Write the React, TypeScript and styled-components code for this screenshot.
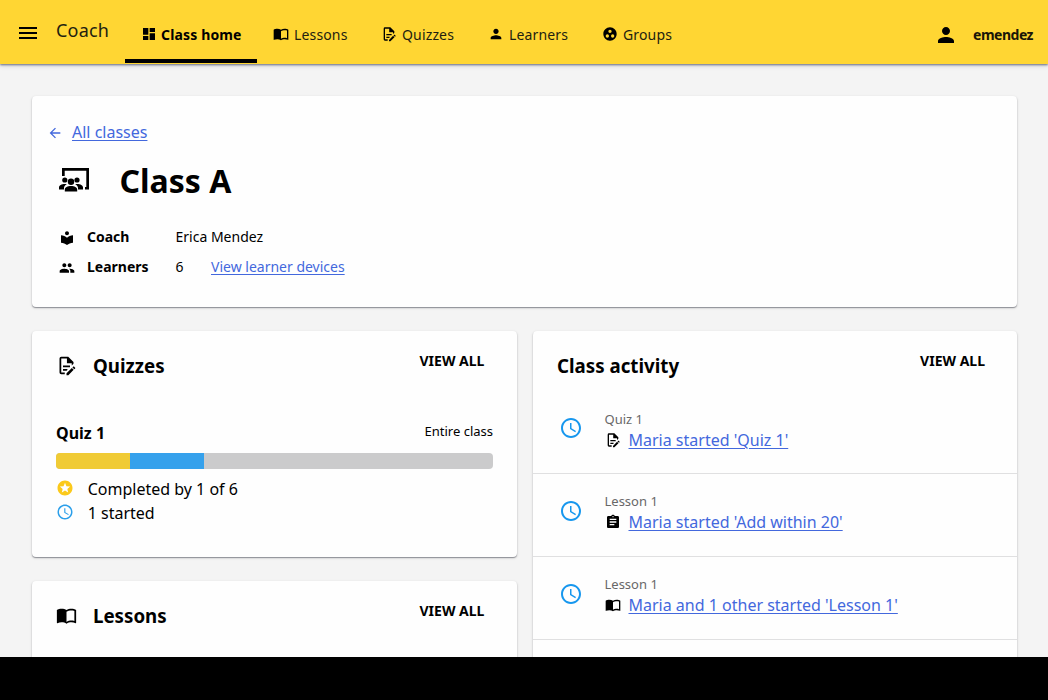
import React from "react";
import styled, { createGlobalStyle } from "styled-components";
import {
  MdMenu,
  MdDashboard,
  MdPerson,
  MdGroupWork,
  MdArrowBack,
  MdLocalLibrary,
  MdPeople,
  MdStars,
  MdAccessTime,
  MdAssignment,
} from "react-icons/md";

const Global = createGlobalStyle`
  * { box-sizing: border-box; }
  body {
    margin: 0;
    background: #000;
    color: #000;
    font-family: "Noto Sans", sans-serif;
    font-size: 16px;
    overflow: hidden;
  }
  svg { display: block; flex: none; }
`;

const Screen = styled.div`
  height: 657px;
  overflow: hidden;
  background: #f4f4f4;
`;

const Bar = styled.header`
  height: 64px;
  display: flex;
  background: #ffd633;
  box-shadow: 0 1px 2px rgba(40, 50, 90, 0.65), 0 2px 5px rgba(0, 0, 0, 0.12);
  position: relative;
`;

const MenuButton = styled.div`
  padding: 21px 16px 0;
  width: 56px;
`;

const AppName = styled.div`
  width: 69px;
  padding-top: 17px;
  font-size: 18px;
  line-height: 27px;
  letter-spacing: 0.2px;
  color: #221e10;
`;

const Nav = styled.nav`
  display: flex;
  flex: 1;
`;

const Tab = styled.div<{ $active?: boolean; $width: number }>`
  width: ${(p) => p.$width}px;
  height: 63px;
  padding: 11px 0 0 16px;
  display: flex;
  align-items: center;
  gap: ${(p) => (p.$active ? 4 : 5)}px;
  font-size: 14px;
  line-height: 20px;
  letter-spacing: 0.15px;
  white-space: nowrap;
  font-weight: ${(p) => (p.$active ? 700 : 400)};
  color: ${(p) => (p.$active ? "#000" : "#221e10")};
  border-bottom: 4px solid ${(p) => (p.$active ? "#000" : "transparent")};
  svg { color: #000; margin-bottom: 2px; }
`;

const User = styled.div`
  display: flex;
  align-items: center;
  gap: 15px;
  padding: 5px 15px 0 0;
  font-size: 14px;
  font-weight: 700;
  letter-spacing: -0.5px;
  color: #1a1608;
  svg { color: #000; }
`;

const Page = styled.main`
  padding: 32px 31px 0 32px;
`;

const Card = styled.section`
  background: #fefefe;
  border-radius: 4px;
  box-shadow: 0 1px 1px rgba(30, 34, 50, 0.4), 0 1px 3px rgba(0, 0, 0, 0.16);
`;

const ClassCard = styled(Card)`
  height: 211px;
  padding: 24px 15px;
`;

const Link = styled.span`
  color: #4368dd;
  text-decoration: underline;
  text-decoration-thickness: 1px;
  text-underline-offset: 2px;
`;

const BackRow = styled.div`
  display: flex;
  align-items: center;
  gap: 9px;
  height: 24px;
  line-height: 24px;
  svg { color: #4368dd; margin-top: 1px; }
`;

const ClassTitle = styled.h1`
  display: flex;
  align-items: center;
  gap: 29.5px;
  margin: 15px 0 0 11px;
  height: 44px;
  font-size: 32px;
  line-height: 44px;
  svg { margin-bottom: 3px; }
`;

const Facts = styled.div`
  margin: 19px 0 0 12px;
`;

const Fact = styled.div`
  display: grid;
  grid-template-columns: 28px 88.5px 35.5px auto;
  align-items: center;
  height: 30px;
  font-size: 14px;
  line-height: 20px;
  white-space: nowrap;
  svg { margin-top: 1px; }
`;

const Columns = styled.div`
  display: grid;
  grid-template-columns: 485px 484px;
  column-gap: 16px;
  margin-top: 24px;
`;

const Stack = styled.div`
  display: flex;
  flex-direction: column;
  gap: 24px;
`;

const Panel = styled(Card)<{ $height: number }>`
  height: ${(p) => p.$height}px;
`;

const PanelHead = styled.div`
  display: flex;
  align-items: flex-start;
  padding: 20px 32px 0 24px;
  ${Stack} & { padding-right: 32.6px; }
`;

const PanelIcon = styled.div`
  width: 37px;
  padding-top: 4px;
`;

const PanelTitle = styled.h2`
  flex: 1;
  margin: 0;
  font-size: 18.72px;
  line-height: 30px;
`;

const ViewAll = styled.span`
  font-size: 14px;
  font-weight: 700;
  line-height: 20px;
`;

const QuizBody = styled.div`
  padding: 41px 24px 0;
`;

const QuizRow = styled.div`
  display: flex;
  justify-content: space-between;
  height: 24px;
  font-weight: 700;
  line-height: 22px;
`;

const Scope = styled.span`
  font-size: 13px;
  line-height: 19px;
  font-weight: 400;
`;

const Progress = styled.div`
  display: flex;
  width: 437px;
  height: 16px;
  margin: 7px 0 8px;
  border-radius: 4px;
  overflow: hidden;
  background: #cbcbcc;
`;

const Segment = styled.div<{ $color: string }>`
  width: 74px;
  background: ${(p) => p.$color};
`;

const Status = styled.div`
  display: flex;
  align-items: center;
  gap: 13.7px;
  height: 24px;
  line-height: 24px;
  svg { margin-bottom: 2px; }
`;

const Activity = styled.div`
  display: flex;
  height: 83px;
  padding: 18px 0 0 26px;
  border-bottom: 1px solid #e0e0e1;
  &:first-child { padding-top: 19px; }
`;

const ActivityClock = styled.div`
  width: 45.5px;
  padding-top: 7px;
  svg { color: #1797ee; }
  ${Activity}:first-child & { padding-top: 6px; }
`;

const ActivityText = styled.div`
  display: flex;
  flex-direction: column;
`;

const Context = styled.span`
  font-size: 13px;
  line-height: 19px;
  color: #686868;
`;

const ActivityLine = styled.div`
  display: flex;
  align-items: center;
  gap: 8px;
  height: 22px;
  white-space: nowrap;
  svg { margin-bottom: 1px; }
`;

const QuizIcon = ({ size }: { size: number }) => (
  <svg width={size} height={size} viewBox="0 0 24 24" fill="currentColor">
    <path d="M8,12H16V14H8V12M10,20H6V4H13V9H18V12.1L20,10.1V8L14,2H6A2,2 0 0,0 4,4V20A2,2 0 0,0 6,22H10V20M8,18H12.1L13,17.1V16H8V18M20.2,13C20.3,13 20.5,13.1 20.6,13.2L21.9,14.5C22.1,14.7 22.1,15.1 21.9,15.3L20.9,16.3L18.8,14.2L19.8,13.2C19.9,13.1 20,13 20.2,13M20.2,16.9L14.1,23H12V20.9L18.1,14.8L20.2,16.9Z" />
    <path d="M12.500 2.500v7h7z" />
  </svg>
);

const LessonIcon = ({ size }: { size: number }) => (
  <svg width={size} height={size} viewBox="0 0 24 24" fill="currentColor">
    <path transform="translate(0 0.8)" d="M12 5C10.500 4 8.500 3.500 6.500 3.500S2.300 4 1 5v14.600c0 .3.300.5.600.4 1.500-.7 3.200-1.100 4.900-1.100 2 0 4 .5 5.500 1.600 1.500-1 3.700-1.600 5.500-1.600 1.700 0 3.400.4 4.900 1.100.300.1.600-.1.600-.4V5c-1.300-1-3.500-1.500-5.500-1.500S13.500 4 12 5zm9 12.500c-1.100-.3-2.300-.5-3.500-.5-1.700 0-4.100.600-5.500 1.500V7c1.400-.900 3.800-1.500 5.500-1.500 1.200 0 2.400.2 3.500.5z" />
  </svg>
);

const ClassIcon = () => (
  <svg width="32" height="26" viewBox="0 0 32 26" fill="currentColor">
    <path d="M4 9V1h27v21.500h-4v-2.500h1.300V3.700H6.700V9z" />
    <circle cx="6.800" cy="13" r="2.600" />
    <circle cx="19" cy="13" r="2.600" />
    <circle cx="13" cy="14.800" r="3.200" />
    <path d="M1 22.500v-2.200c0-2 2.600-3.400 5.800-3.400.8 0 1.400.1 2 .3-1.900 1-2.800 2.200-2.800 3.700v1.600zM25 22.500v-2.200c0-2-2.600-3.400-5.800-3.400-.8 0-1.400.1-2 .3 1.900 1 2.800 2.200 2.800 3.700v1.600zM6.800 24.500v-2c0-2.200 2.800-3.600 6.200-3.600s6.200 1.400 6.200 3.600v2z" />
  </svg>
);

const activities = [
  { context: "Quiz 1", text: "Maria started 'Quiz 1'", icon: <QuizIcon size={16} /> },
  { context: "Lesson 1", text: "Maria started 'Add within 20'", icon: <MdAssignment size={16} /> },
  { context: "Lesson 1", text: "Maria and 1 other started 'Lesson 1'", icon: <LessonIcon size={16} /> },
];

const ActivityList = styled.div`
  padding-top: 10px;
`;

export default function App() {
  return (
    <>
      <Global />
      <Screen>
        <Bar>
          <MenuButton><MdMenu size={24} /></MenuButton>
          <AppName>Coach</AppName>
          <Nav>
            <Tab $active $width={132}><MdDashboard size={16} />Class home</Tab>
            <Tab $width={108}><LessonIcon size={16} />Lessons</Tab>
            <Tab $width={107}><QuizIcon size={16} />Quizzes</Tab>
            <Tab $width={114}><MdPerson size={16} />Learners</Tab>
            <Tab $width={110}><MdGroupWork size={16} />Groups</Tab>
          </Nav>
          <User><MdPerson size={24} />emendez</User>
        </Bar>
        <Page>
          <ClassCard>
            <BackRow><MdArrowBack size={16} /><Link>All classes</Link></BackRow>
            <ClassTitle><ClassIcon />Class A</ClassTitle>
            <Facts>
              <Fact><MdLocalLibrary size={16} /><b>Coach</b><span>Erica Mendez</span></Fact>
              <Fact><MdPeople size={16} /><b>Learners</b><span>6</span><Link>View learner devices</Link></Fact>
            </Facts>
          </ClassCard>
          <Columns>
            <Stack>
              <Panel $height={226}>
                <PanelHead>
                  <PanelIcon><QuizIcon size={21} /></PanelIcon>
                  <PanelTitle>Quizzes</PanelTitle>
                  <ViewAll>VIEW ALL</ViewAll>
                </PanelHead>
                <QuizBody>
                  <QuizRow>Quiz 1<Scope>Entire class</Scope></QuizRow>
                  <Progress>
                    <Segment $color="#f0cb35" />
                    <Segment $color="#35a1ec" />
                  </Progress>
                  <Status><MdStars size={18} color="#fbc91b" />Completed by 1 of 6</Status>
                  <Status><MdAccessTime size={18} color="#2b9fea" />1 started</Status>
                </QuizBody>
              </Panel>
              <Panel $height={226}>
                <PanelHead>
                  <PanelIcon><LessonIcon size={21} /></PanelIcon>
                  <PanelTitle>Lessons</PanelTitle>
                  <ViewAll>VIEW ALL</ViewAll>
                </PanelHead>
              </Panel>
            </Stack>
            <Panel $height={480}>
              <PanelHead>
                <PanelTitle>Class activity</PanelTitle>
                <ViewAll>VIEW ALL</ViewAll>
              </PanelHead>
              <ActivityList>
                {activities.map((a) => (
                  <Activity key={a.text}>
                    <ActivityClock><MdAccessTime size={24} /></ActivityClock>
                    <ActivityText>
                      <Context>{a.context}</Context>
                      <ActivityLine>{a.icon}<Link>{a.text}</Link></ActivityLine>
                    </ActivityText>
                  </Activity>
                ))}
              </ActivityList>
            </Panel>
          </Columns>
        </Page>
      </Screen>
    </>
  );
}
